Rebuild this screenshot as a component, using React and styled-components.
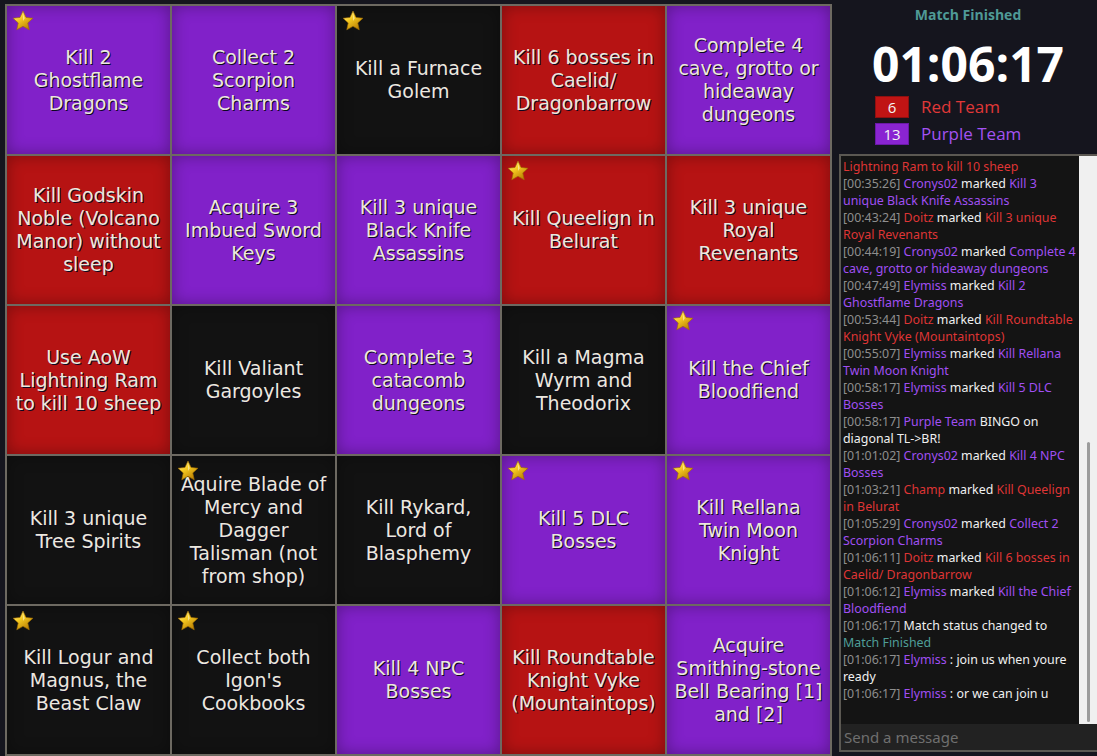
import React from "react"
import styled, { createGlobalStyle } from "styled-components"

const GlobalStyle = createGlobalStyle`
  html, body {
    margin: 0;
    padding: 0;
    background: #15151e;
    overflow: hidden;
  }
`

const colors = {
  purple: "#8121c9",
  red: "#b61313",
  black: "#121212",
}

const board = [
  ["purple", "Kill 2 Ghostflame Dragons", true],
  ["purple", "Collect 2 Scorpion Charms"],
  ["black", "Kill a Furnace Golem", true],
  ["red", "Kill 6 bosses in Caelid/ Dragonbarrow"],
  ["purple", "Complete 4 cave, grotto or hideaway dungeons"],
  ["red", "Kill Godskin Noble (Volcano Manor) without sleep"],
  ["purple", "Acquire 3 Imbued Sword Keys"],
  ["purple", "Kill 3 unique Black Knife Assassins"],
  ["red", "Kill Queelign in Belurat", true],
  ["red", "Kill 3 unique Royal Revenants"],
  ["red", "Use AoW Lightning Ram to kill 10 sheep"],
  ["black", "Kill Valiant Gargoyles"],
  ["purple", "Complete 3 catacomb dungeons"],
  ["black", "Kill a Magma Wyrm and Theodorix"],
  ["purple", "Kill the Chief Bloodfiend", true],
  ["black", "Kill 3 unique Tree Spirits"],
  ["black", "Aquire Blade of Mercy and Dagger Talisman (not from shop)", true],
  ["black", "Kill Rykard, Lord of Blasphemy"],
  ["purple", "Kill 5 DLC Bosses", true],
  ["purple", "Kill Rellana Twin Moon Knight", true],
  ["black", "Kill Logur and Magnus, the Beast Claw", true],
  ["black", "Collect both Igon's Cookbooks", true],
  ["purple", "Kill 4 NPC Bosses"],
  ["red", "Kill Roundtable Knight Vyke (Mountaintops)"],
  ["purple", "Acquire Smithing-stone Bell Bearing [1] and [2]"],
]

// chat entries: [time, who, whoColor, verb, goal, goalColor]
const log = [
  ["00:35:26", "Cronys02", "p", " marked ", "Kill 3 unique Black Knife Assassins", "p"],
  ["00:43:24", "Doitz", "r", " marked ", "Kill 3 unique Royal Revenants", "r"],
  ["00:44:19", "Cronys02", "p", " marked ", "Complete 4 cave, grotto or hideaway dungeons", "p"],
  ["00:47:49", "Elymiss", "p", " marked ", "Kill 2 Ghostflame Dragons", "p"],
  ["00:53:44", "Doitz", "r", " marked ", "Kill Roundtable Knight Vyke (Mountaintops)", "r"],
  ["00:55:07", "Elymiss", "p", " marked ", "Kill Rellana Twin Moon Knight", "p"],
  ["00:58:17", "Elymiss", "p", " marked ", "Kill 5 DLC Bosses", "p"],
  ["00:58:17", "Purple Team", "p", " BINGO on diagonal TL->BR!", "", "w"],
  ["01:01:02", "Cronys02", "p", " marked ", "Kill 4 NPC Bosses", "p"],
  ["01:03:21", "Champ", "r", " marked ", "Kill Queelign in Belurat", "r"],
  ["01:05:29", "Cronys02", "p", " marked ", "Collect 2 Scorpion Charms", "p"],
  ["01:06:11", "Doitz", "r", " marked ", "Kill 6 bosses in Caelid/ Dragonbarrow", "r"],
  ["01:06:12", "Elymiss", "p", " marked ", "Kill the Chief Bloodfiend", "p"],
  ["01:06:17", "", "w", "Match status changed to ", "Match Finished", "t"],
  ["01:06:17", "Elymiss", "p", " : join us when youre ready", "", "w"],
  ["01:06:17", "Elymiss", "p", " : or we can join u", "", "w"],
]

const Star = () => (
  <svg width="22" height="22" viewBox="0 0 24 24">
    <defs>
      <linearGradient id="starfill" x1="0.1" y1="0" x2="0.8" y2="1">
        <stop offset="0" stopColor="#fff8c4" />
        <stop offset="0.4" stopColor="#f7cc22" />
        <stop offset="1" stopColor="#b57800" />
      </linearGradient>
    </defs>
    <path
      d="M12 1.2l3.3 6.9 7.5.9-5.6 5.1 1.6 7.5L12 17.8l-6.8 3.8 1.6-7.5L1.2 9l7.5-.9z"
      fill="url(#starfill)"
      stroke="#a06c00"
      strokeWidth="0.7"
      strokeLinejoin="round"
    />
    <path d="M12 4.5l2 4.4L12 12z" fill="#fffbe0" opacity="0.55" />
  </svg>
)

const App = () => {
  return (
    <Page>
      <GlobalStyle />
      <Board>
        {board.map(([color, text, starred], i) => (
          <Cell key={i} $color={colors[color]}>
            {starred && (
              <StarSpot>
                <Star />
              </StarSpot>
            )}
            {text}
          </Cell>
        ))}
      </Board>
      <Side>
        <Status>Match Finished</Status>
        <Timer>01:06:17</Timer>
        <Teams>
          <TeamRow>
            <Score $bg="#c01414" $edge="#8e1010">6</Score>
            <TeamName $color="#e03838">Red Team</TeamName>
          </TeamRow>
          <TeamRow>
            <Score $bg="#8a24d2" $edge="#6a1aa6">13</Score>
            <TeamName $color="#a352f2">Purple Team</TeamName>
          </TeamRow>
        </Teams>
        <Chat>
          <ChatBody>
            <Messages>
              <Line>
                <Txt $c="r">Lightning Ram to kill 10 sheep</Txt>
              </Line>
              {log.map(([time, who, wc, verb, goal, gc], i) => (
                <Line key={i}>
                  <Txt $c="g">[{time}]</Txt>{" "}
                  {who && <Txt $c={wc}>{who}</Txt>}
                  <Txt $c="w">{verb}</Txt>
                  {goal && <Txt $c={gc}>{goal}</Txt>}
                </Line>
              ))}
            </Messages>
            <Track>
              <Thumb />
            </Track>
          </ChatBody>
          <Input placeholder="Send a message" />
        </Chat>
      </Side>
    </Page>
  )
}

export default App

const Page = styled.div`
display: flex;
align-items: flex-start;
padding: 4px 0 0 5px;
width: 1097px;
height: 756px;
box-sizing: border-box;
`

const Board = styled.div`
display: grid;
grid-template-columns: repeat(5, 163px);
grid-template-rows: repeat(5, 148px);
gap: 2px;
padding: 2px;
background: #6d6961;
flex-shrink: 0;
`

const Cell = styled.div`
position: relative;
display: flex;
align-items: center;
justify-content: center;
text-align: center;
padding: 0 7px;
background-color: ${(p) => p.$color};
box-shadow: inset 0 0 16px rgba(0, 0, 0, 0.32);
color: #ece8df;
font-family: "DejaVu Sans", sans-serif;
font-size: 19px;
line-height: 23px;
text-shadow: 1px 1px 0 #0c0820;
`

const StarSpot = styled.div`
position: absolute;
top: 4px;
left: 5px;
width: 22px;
height: 22px;
`

const Side = styled.div`
display: flex;
flex-direction: column;
margin-left: 7px;
width: 258px;
flex-shrink: 0;
height: 752px;
margin-top: -4px;
`

const Status = styled.div`
font-family: "Open Sans", sans-serif;
font-weight: 700;
font-size: 14px;
color: #4f9a96;
text-align: center;
padding-top: 5px;
line-height: 19px;
`

const Timer = styled.div`
font-family: "Open Sans", sans-serif;
font-weight: 700;
font-size: 48px;
line-height: 56px;
color: #ffffff;
text-align: center;
margin-top: 12px;
`

const Teams = styled.div`
display: flex;
flex-direction: column;
gap: 5px;
padding-left: 36px;
margin-top: 4px;
height: 58px;
`

const TeamRow = styled.div`
display: flex;
align-items: center;
gap: 12px;
`

const Score = styled.div`
width: 32px;
height: 20px;
background: ${(p) => p.$bg};
border: 1px solid ${(p) => p.$edge};
color: #f4f4f4;
font-family: "Open Sans", sans-serif;
font-size: 15px;
line-height: 20px;
text-align: center;
`

const TeamName = styled.div`
color: ${(p) => p.$color};
font-family: "Open Sans", sans-serif;
font-size: 17px;
line-height: 20px;
`

const Chat = styled.div`
flex: 1;
display: flex;
flex-direction: column;
border: 2px solid #5b5852;
border-right: none;
background: #141414;
min-height: 0;
`

const ChatBody = styled.div`
flex: 1;
display: flex;
min-height: 0;
`

const Messages = styled.div`
flex: 1;
padding: 2px 0 0 2px;
overflow: hidden;
font-family: "Noto Sans", sans-serif;
font-size: 12.4px;
line-height: 17px;
`

const Line = styled.div`
color: #eeeeee;
`

const tones = {
  g: "#8e8e8e",
  p: "#a04ff2",
  r: "#df3535",
  w: "#f0f0f0",
  t: "#4f9e98",
}

const Txt = styled.span`
color: ${(p) => tones[p.$c]};
`

const Track = styled.div`
width: 18px;
background: #f0f0f0;
display: flex;
justify-content: center;
padding-top: 286px;
box-sizing: border-box;
`

const Thumb = styled.div`
width: 3px;
height: 280px;
border-radius: 2px;
background: #9c9c9c;
`

const Input = styled.input`
height: 26px;
border: none;
outline: none;
background: #222222;
color: #eeeeee;
padding: 0 3px;
font-family: "Noto Sans", sans-serif;
font-size: 15px;
&::placeholder {
  color: #6f6f6f;
}
`
